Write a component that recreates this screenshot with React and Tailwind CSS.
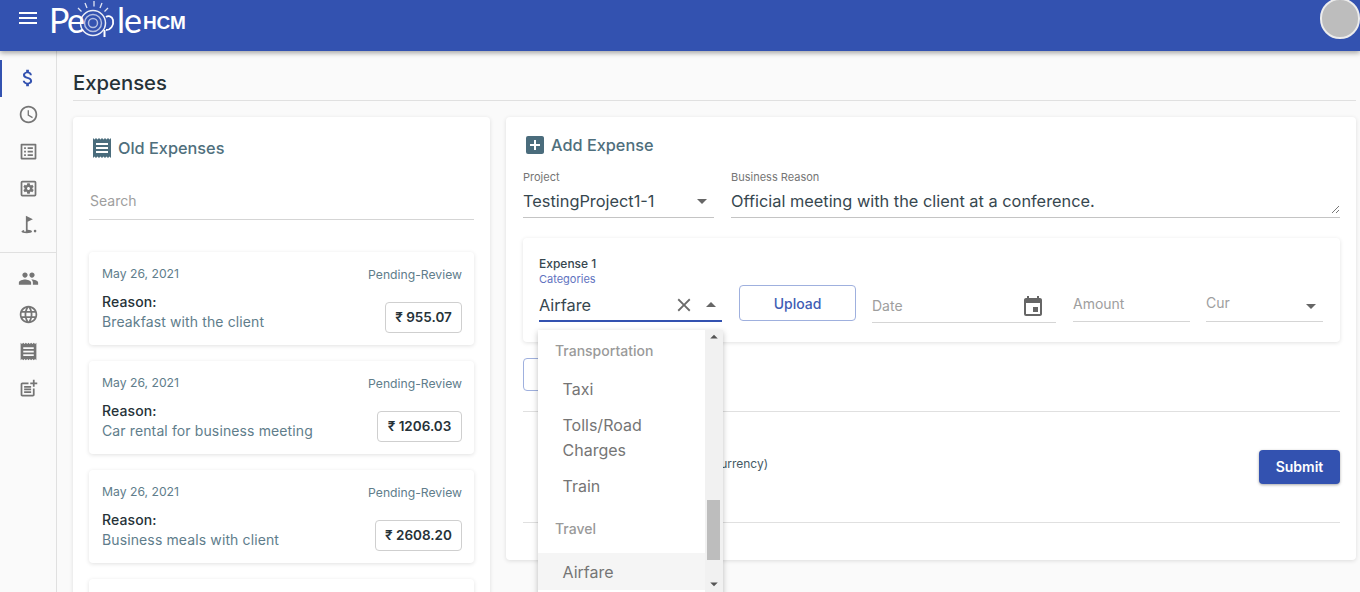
import React from "react";
import {
  MdMenu, MdAttachMoney, MdOutlineSchedule, MdOutlineListAlt, MdOutlineSettingsApplications,
  MdGolfCourse, MdPeople, MdLanguage, MdReceipt, MdOutlinePostAdd, MdAddBox, MdClose,
  MdArrowDropDown, MdArrowDropUp, MdEvent,
} from "react-icons/md";

const font = { fontFamily: "Inter, 'Noto Sans', sans-serif" };

function Logo() {
  return (
    <div className="relative ml-[9px] h-[51px] w-[136px] text-white select-none">
      <span className="absolute left-0 top-[-1px] text-[34px] leading-[42px] font-normal tracking-[-1.5px] font-['Lato',sans-serif]">Pe</span>
      <svg className="absolute left-[22px] top-[1px]" width="50" height="40" viewBox="0 0 50 40" fill="none" stroke="#fff">
        <g strokeWidth="1.5" opacity="0.9">
          <circle cx="22" cy="22" r="12.5" />
          <circle cx="22" cy="22" r="8.5" opacity="0.7" />
          <circle cx="22" cy="22" r="4.5" opacity="0.7" />
        </g>
        <g strokeWidth="1.3" opacity="0.85">
          <path d="M14 2l2 5M23 0v5.5M31 2l-2 5M7 7l3.5 3.5M37 7l-3.5 3.5" />
        </g>
        <path d="M35 16c2-1.5 6-1 7 3c1 5-2 10-7 10" strokeWidth="1.8" />
        <path d="M33.5 29v7" strokeWidth="2" />
      </svg>
      <span className="absolute left-[68px] top-[-1px] text-[34px] leading-[42px] font-normal tracking-[-1px] font-['Lato',sans-serif]">le</span>
      <span className="absolute left-[94px] top-[11px] text-[19px] leading-[24px] font-bold tracking-[-0.2px] font-['Liberation_Sans',sans-serif]">HCM</span>
    </div>
  );
}

function Header() {
  return (
    <header className="relative z-20 flex h-[51px] shrink-0 items-start bg-[#3352b0] shadow-[0_2px_5px_rgba(0,0,0,0.35)]">
      <MdMenu className="ml-[16px] mt-[6px] text-white" size={24} />
      <Logo />
      <div className="ml-auto -mt-[2px] h-[41px] w-[40px] rounded-full border-[2.5px] border-[#ececec] bg-[#bdbdbd]" />
    </header>
  );
}

function NavIcon({ icon: Icon, active }) {
  return (
    <div className="relative flex h-[36.6px] items-center justify-center">
      {active && <div className="absolute left-0 top-0 h-full w-[2px] bg-[#3352b0]" />}
      <Icon size={active ? 22 : 21} className={active ? "text-[#3352b0]" : "text-[#757575]"} />
    </div>
  );
}

function Sidebar() {
  return (
    <aside className="w-[57px] shrink-0 border-r border-[#e0e0e0] bg-[#fafafa] pt-[9px]">
      <NavIcon icon={MdAttachMoney} active />
      <NavIcon icon={MdOutlineSchedule} />
      <NavIcon icon={MdOutlineListAlt} />
      <NavIcon icon={MdOutlineSettingsApplications} />
      <NavIcon icon={MdGolfCourse} />
      <div className="mt-[9px] mb-[7px] h-px bg-[#e0e0e0]" />
      <NavIcon icon={MdPeople} />
      <NavIcon icon={MdLanguage} />
      <NavIcon icon={MdReceipt} />
      <NavIcon icon={MdOutlinePostAdd} />
    </aside>
  );
}

function ExpenseCard({ reason, amount, width }) {
  return (
    <div className="mb-[16px] h-[93px] shrink-0 rounded-[4px] bg-white pl-[13px] pr-[12px] pt-[14px] shadow-[0_1px_4px_rgba(0,0,0,0.12)]">
      <div className="flex justify-between text-[12.2px] leading-[16px] text-[#607d8b]">
        <span>May 26, 2021</span>
        <span className="pt-[1px]">Pending-Review</span>
      </div>
      <div className="mt-[9px] flex items-start justify-between">
        <div className="text-[14px] leading-[20px] tracking-[0.12px]">
          <div className="font-medium text-[#263238]">Reason:</div>
          <div className="text-[#607d8b]">{reason}</div>
        </div>
        <div className={`mt-[10px] flex h-[31px] items-center justify-center rounded-[4px] border border-[#cfcfcf] text-[13.5px] font-semibold text-[#263238] ${width}`}>
          <span>₹ {amount}</span>
        </div>
      </div>
    </div>
  );
}

function OldExpenses() {
  return (
    <section className="h-[520px] w-[417px] shrink-0 overflow-hidden rounded-[4px] bg-white px-[16px] shadow-[0_1px_4px_rgba(0,0,0,0.12)]">
      <div className="mt-[18px] flex h-[26px] items-center pl-[1px] text-[#4f6f7d]">
        <MdReceipt size={24} className="text-[#4a6c7c]" />
        <span className="ml-[4px] text-[16.3px] font-medium">Old Expenses</span>
      </div>
      <div className="mt-[30px] h-[29px] border-b border-[#d5d5d5] pl-px text-[14px] leading-[20px] text-[#9e9e9e]">Search</div>
      <div className="mt-[32px] flex flex-col">
        <ExpenseCard reason="Breakfast with the client" amount="955.07" width="w-[77px]" />
        <ExpenseCard reason="Car rental for business meeting" amount="1206.03" width="w-[85px]" />
        <ExpenseCard reason="Business meals with client" amount="2608.20" width="w-[87px]" />
        <ExpenseCard reason="Client dinner" amount="812.40" width="w-[77px]" />
      </div>
    </section>
  );
}

function Option({ children, group, selected, h }) {
  if (group) {
    return <div className={`px-[17px] text-[14px] font-medium leading-[20px] text-[#9a9a9a] ${h}`}>{children}</div>;
  }
  return (
    <div className={`pl-[24.5px] pr-[12px] text-[16px] leading-[25px] text-[#757575] ${selected ? "bg-[#f5f5f5]" : ""} ${h}`}>{children}</div>
  );
}

function Dropdown() {
  return (
    <div className="absolute left-[-1px] top-[60px] z-10 flex h-[300px] w-[185px] overflow-hidden bg-white shadow-[0_2px_6px_rgba(0,0,0,0.25)]">
      <div className="w-[167px] pt-[11px]">
        <Option group h="h-[36px]">Transportation</Option>
        <Option h="h-[36px]">Taxi</Option>
        <Option h="h-[61px]">Tolls/Road Charges</Option>
        <Option h="h-[36px]">Train</Option>
        <Option group h="h-[43px] pt-[9px]">Travel</Option>
        <Option selected h="h-[37px] pt-[7px]">Airfare</Option>
      </div>
      <div className="relative w-[18px] bg-[#f1f1f1]">
        <MdArrowDropUp size={18} className="absolute left-0 -top-[2px] text-[#555]" />
        <div className="absolute left-[2px] top-[170px] h-[60px] w-[13px] bg-[#bdbdbd]" />
        <MdArrowDropDown size={18} className="absolute left-0 top-[245px] text-[#555]" />
      </div>
    </div>
  );
}

function AddExpense() {
  return (
    <section className="relative h-[443px] w-[850px] shrink-0 rounded-[4px] bg-white pl-[17px] pr-[16px] shadow-[0_1px_4px_rgba(0,0,0,0.12)]">
      <div className="mt-[16px] flex h-[24px] items-center pt-0 text-[#4f6f7d]">
        <MdAddBox size={24} className="text-[#4a6c7c]" />
        <span className="ml-[4px] text-[16.3px] font-medium">Add Expense</span>
      </div>
      <div className="mt-[13px] flex gap-[17px]">
        <div className="w-[191px]">
          <div className="text-[11px] leading-[14px] text-[#757575]">Project</div>
          <div className="mt-[4px] flex h-[30px] items-center justify-between border-b border-[#c4c4c4] pb-[3px]">
            <span className="text-[16.35px] text-[#37474f]">TestingProject1-1</span>
            <MdArrowDropDown size={24} className="text-[#666]" />
          </div>
        </div>
        <div className="flex-1">
          <div className="text-[11px] leading-[14px] text-[#757575]">Business Reason</div>
          <div className="relative mt-[4px] flex h-[30px] items-center border-b border-[#c4c4c4] pb-[3px]">
            <span className="text-[16.35px] text-[#37474f]">Official meeting with the client at a conference.</span>
            <svg className="absolute bottom-[3px] right-0" width="9" height="9" viewBox="0 0 9 9" stroke="#777" fill="none">
              <path d="M1 8l7-7M5 8l3-3" />
            </svg>
          </div>
        </div>
      </div>

      <div className="mt-[20px] h-[104px] rounded-[4px] bg-white px-[16px] pt-[18px] shadow-[0_1px_4px_rgba(0,0,0,0.12)]">
        <div className="h-[14px] text-[12px] font-medium leading-[16px] text-[#37474f]">Expense 1</div>
        <div className="flex gap-[17px]">
          <div className="relative w-[183px]">
            <div className="mt-[2px] text-[11px] leading-[14px] text-[#5f73c0]">Categories</div>
            <div className="mt-[3px] flex h-[33px] items-center border-b-2 border-[#3352b0] pt-[3px] pb-[2px]">
              <span className="flex-1 text-[16.35px] text-[#37474f]">Airfare</span>
              <MdClose size={22} className="text-[#6b6b6b]" />
              <MdArrowDropUp size={24} className="ml-[4px] -mr-[1px] text-[#666]" />
            </div>
            <Dropdown />
          </div>
          <div className="mt-[15px] flex h-[36px] w-[117px] items-center justify-center rounded-[4px] border border-[#9fb0de] text-[14px] font-medium text-[#3f5db5]">Upload</div>
          <div className="mt-[14px] -ml-px flex h-[39px] w-[184px] items-center justify-between border-b border-[#d5d5d5] pt-[7px] pr-[11px] text-[14px] text-[#9e9e9e]">
            <span className="-mt-[3px]">Date</span>
            <MdEvent size={24} className="text-[#666]" />
          </div>
          <div className="mt-[14px] flex h-[38px] w-[117px] items-center border-b border-[#d5d5d5] pt-[2px] text-[14px] text-[#9e9e9e]">Amount</div>
          <div className="mt-[14px] -ml-px flex h-[38px] w-[117px] items-center justify-between border-b border-[#d5d5d5] pt-[2px] text-[14px] text-[#9e9e9e]">
            <span className="-mt-[3px]">Cur</span>
            <MdArrowDropDown size={24} className="mt-[4px] text-[#666]" />
          </div>
        </div>
      </div>

      <div className="mt-[16px] flex h-[33px] w-[120px] items-center justify-center rounded-[4px] border border-[#9fb0de] text-[14px] font-medium text-[#3352b0]">Add More</div>
      <div className="mt-[20px] h-px bg-[#e0e0e0]" />
      <div className="flex h-[110px] items-center justify-between">
        <div className="-mt-[6px] pl-[108px] text-[12px] leading-[16px] text-[#455a64]">Total (In Base Currency)</div>
        <div className="-mt-[1px] flex h-[34px] w-[81px] items-center justify-center rounded-[4px] bg-[#3352b0] text-[14px] font-semibold text-white shadow-[0_1px_3px_rgba(0,0,0,0.35)]">Submit</div>
      </div>
      <div className="h-px bg-[#e0e0e0]" />
    </section>
  );
}

export default function App() {
  return (
    <div style={font} className="flex h-[592px] w-[1360px] flex-col overflow-hidden bg-[#fafafa]">
      <Header />
      <div className="flex min-h-0 flex-1">
        <Sidebar />
        <main className="min-w-0 flex-1 pl-[16px] pr-[4px]">
          <h1 className="flex h-[50px] items-end border-b border-[#e0e0e0] pb-[1px] text-[20.3px] font-medium leading-[32px] text-[#263238]">Expenses</h1>
          <div className="mt-[16px] flex gap-[16px]">
            <OldExpenses />
            <AddExpense />
          </div>
        </main>
      </div>
    </div>
  );
}
